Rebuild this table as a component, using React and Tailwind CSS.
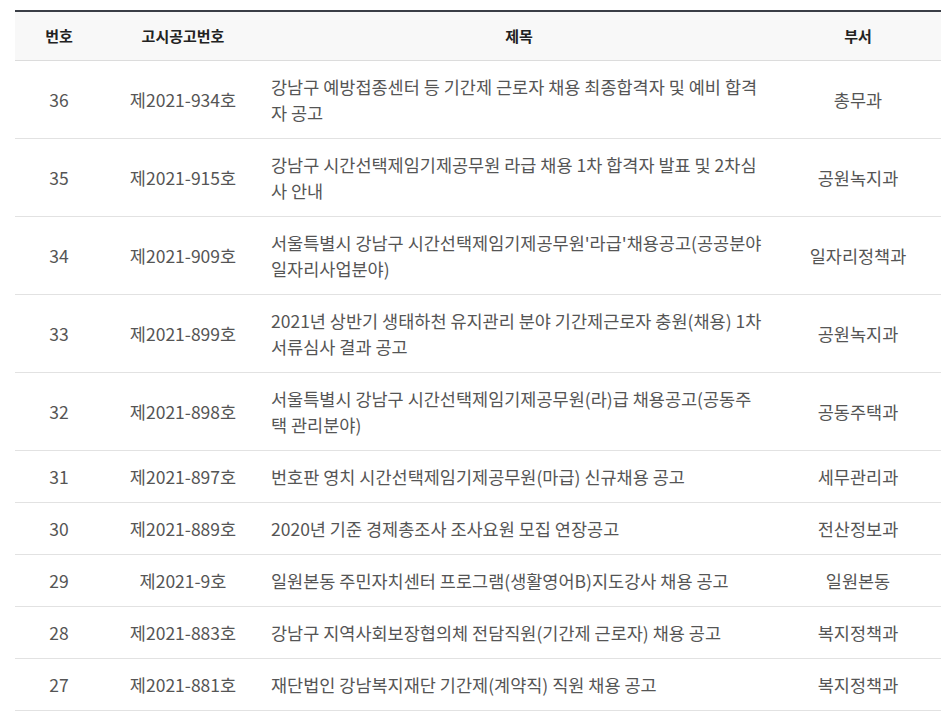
const rows = [
  { no: 36, code: '제2021-934호', title: '강남구 예방접종센터 등 기간제 근로자 채용 최종합격자 및 예비 합격자 공고', dept: '총무과' },
  { no: 35, code: '제2021-915호', title: '강남구 시간선택제임기제공무원 라급 채용 1차 합격자 발표 및 2차심사 안내', dept: '공원녹지과' },
  { no: 34, code: '제2021-909호', title: "서울특별시 강남구 시간선택제임기제공무원'라급'채용공고(공공분야 일자리사업분야)", dept: '일자리정책과' },
  { no: 33, code: '제2021-899호', title: '2021년 상반기 생태하천 유지관리 분야 기간제근로자 충원(채용) 1차 서류심사 결과 공고', dept: '공원녹지과' },
  { no: 32, code: '제2021-898호', title: '서울특별시 강남구 시간선택제임기제공무원(라)급 채용공고(공동주택 관리분야)', dept: '공동주택과' },
  { no: 31, code: '제2021-897호', title: '번호판 영치 시간선택제임기제공무원(마급) 신규채용 공고', dept: '세무관리과' },
  { no: 30, code: '제2021-889호', title: '2020년 기준 경제총조사 조사요원 모집 연장공고', dept: '전산정보과' },
  { no: 29, code: '제2021-9호', title: '일원본동 주민자치센터 프로그램(생활영어B)지도강사 채용 공고', dept: '일원본동' },
  { no: 28, code: '제2021-883호', title: '강남구 지역사회보장협의체 전담직원(기간제 근로자) 채용 공고', dept: '복지정책과' },
  { no: 27, code: '제2021-881호', title: '재단법인 강남복지재단 기간제(계약직) 직원 채용 공고', dept: '복지정책과' },
];

export default function App() {
  return (
    <div
      className="min-h-[719px] bg-white pl-[15px] pt-[10px]"
      style={{ fontFamily: '"Noto Sans CJK KR", "Noto Sans", sans-serif' }}
    >
      <table className="w-[926px] table-fixed border-collapse border-t-2 border-[#3b3f47] text-[17.5px] text-[#555]">
        <colgroup>
          <col className="w-[88px]" />
          <col className="w-[160px]" />
          <col className="w-[512px]" />
          <col className="w-[166px]" />
        </colgroup>
        <thead>
          <tr className="h-[49px] border-b border-[#dcdcdc] bg-[#f8f8f8] text-[15px] font-bold text-[#222]">
            <th className="text-center font-bold">번호</th>
            <th className="text-center font-bold">고시공고번호</th>
            <th className="text-center font-bold">제목</th>
            <th className="text-center font-bold">부서</th>
          </tr>
        </thead>
        <tbody>
          {rows.map((r) => (
            <tr key={r.no} className="border-b border-[#e2e2e2] leading-[26px]">
              <td className="pt-[13px] pb-[12px] text-center">{r.no}</td>
              <td className="pt-[13px] pb-[12px] text-center">{r.code}</td>
              <td className="px-[8px] pt-[13px] pb-[12px] text-left">{r.title}</td>
              <td className="pt-[13px] pb-[12px] text-center">{r.dept}</td>
            </tr>
          ))}
        </tbody>
      </table>
    </div>
  );
}
